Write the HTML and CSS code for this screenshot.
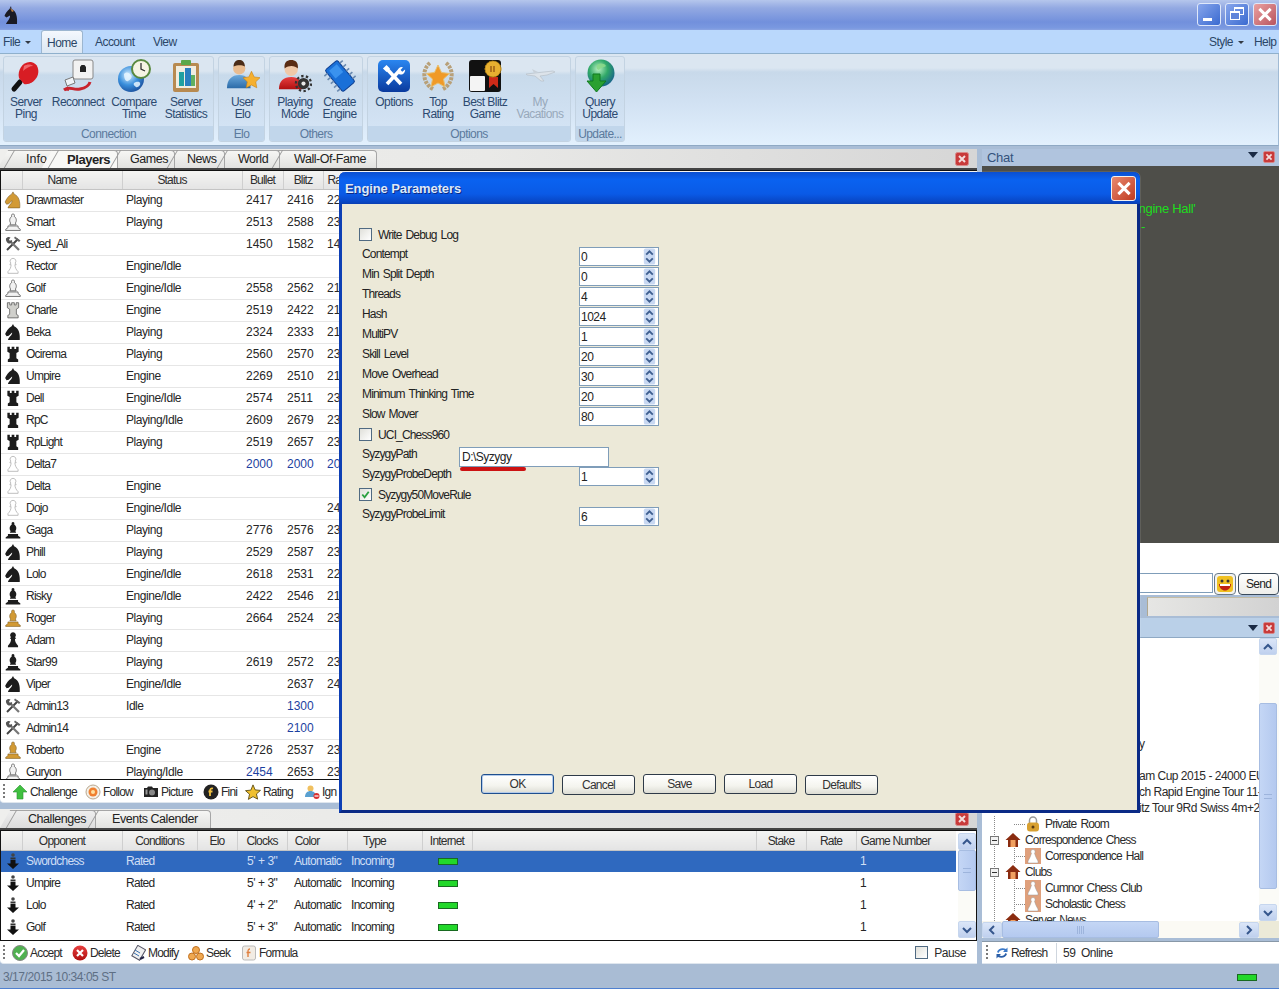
FILE: index.html
```html
<!DOCTYPE html>
<html lang="en">
<head>
<meta charset="utf-8">
<title>Engine Parameters</title>
<link rel="stylesheet" href="styles.css">
</head>
<body>
<svg class="defs" width="0" height="0" aria-hidden="true">
  <defs>
    <linearGradient id="gBlue" x1="0" y1="0" x2="0" y2="1"><stop offset="0" stop-color="#2a86f0"/><stop offset="1" stop-color="#0a3a9e"/></linearGradient>
    <radialGradient id="gGlobe" cx=".4" cy=".35" r=".7"><stop offset="0" stop-color="#d8efff"/><stop offset=".55" stop-color="#3a8fdc"/><stop offset="1" stop-color="#1a4f9c"/></radialGradient>
    <radialGradient id="gGreenGlobe" cx=".4" cy=".35" r=".7"><stop offset="0" stop-color="#b8f0c0"/><stop offset=".5" stop-color="#30a868"/><stop offset="1" stop-color="#16608c"/></radialGradient>
    <linearGradient id="gShirt" x1="0" y1="0" x2="0" y2="1"><stop offset="0" stop-color="#6aa8dc"/><stop offset="1" stop-color="#2a6aa8"/></linearGradient>
    <linearGradient id="gRed" x1="0" y1="0" x2="0" y2="1"><stop offset="0" stop-color="#e84040"/><stop offset="1" stop-color="#b01010"/></linearGradient>

    <symbol id="knight" viewBox="0 0 16 16"><path d="M3.500 15h10.500c.4-5-.5-10.500-5-12.200L8 .8 6.800 2.800C4 4 2 7.500 1 9.800l1.300 2 1.900-.5 3-2.800c.5 2-2.500 3.500-3.700 6.500z"/></symbol>
    <symbol id="rook" viewBox="0 0 16 16"><path d="M3 1.500h2.200v2h1.600v-2h2.400v2h1.600v-2H13V6l-2 1.200v4.600l1.600 1V15H3.400v-2.200l1.600-1V7.200L3 6z"/></symbol>
    <symbol id="bishop" viewBox="0 0 16 16"><path d="M8 .8a1.300 1.300 0 0 1 1 2.100c2 1.400 2.600 4 1.100 6l.7 1.600H5.200l.7-1.600C4.400 6.900 5 4.300 7 2.900A1.300 1.300 0 0 1 8 .8z"/><path d="M3.500 11.500h9v1.500l2 1.500v1h-13v-1l2-1.500z"/></symbol>
    <symbol id="pawn" viewBox="0 0 16 16"><path d="M8 1.200a2.500 2.500 0 0 1 1.800 4.300c.7 .3 1 .8 1 1.300H9.700c0 2.800 1.300 4.600 2.800 6.200v1.500h-9V13c1.500-1.600 2.800-3.400 2.800-6.200H5.200c0-.5.300-1 1-1.300A2.500 2.500 0 0 1 8 1.200z"/></symbol>
    <symbol id="tools" viewBox="0 0 18 18"><path d="M3 15 14 4" stroke="#444" stroke-width="2" fill="none"/><path d="M11 1.500l5.500 4-1.500 1.500-5-4z" fill="#666"/><path d="M15 15 6 6" stroke="#777" stroke-width="2.200" fill="none"/><path d="M2 3.500c1-1.500 3-2 4.500-1L5 4.500l1 1.500 2-1c.5 1.500-.5 3-2 3.500-2 .5-4.500-2-4-5z" fill="#555"/></symbol>
    <symbol id="down" viewBox="0 0 16 18"><circle cx="8" cy="3" r="1.800" fill="#444"/><rect x="5.500" y="5.500" width="5" height="2" fill="#333"/><path d="M5.500 8h5v3.500H14L8 17 2 11.500h3.500z" fill="#111"/></symbol>
    <symbol id="chevup" viewBox="0 0 12 12"><path d="M2 8l4-4 4 4" fill="none" stroke="#35568c" stroke-width="2"/></symbol>
    <symbol id="chevdn" viewBox="0 0 12 12"><path d="M2 4l4 4 4-4" fill="none" stroke="#35568c" stroke-width="2"/></symbol>
    <symbol id="chevl" viewBox="0 0 12 12"><path d="M8 2 4 6l4 4" fill="none" stroke="#35568c" stroke-width="2"/></symbol>
    <symbol id="chevr" viewBox="0 0 12 12"><path d="M4 2l4 4-4 4" fill="none" stroke="#35568c" stroke-width="2"/></symbol>
    <symbol id="spinbtns" viewBox="0 0 13 18"><rect x=".5" y=".5" width="12" height="17" rx="2" fill="#c8d8f2"/><path d="M3 7l3.500-3.500L10 7" fill="none" stroke="#3f5f90" stroke-width="2"/><path d="M3 11l3.500 3.500L10 11" fill="none" stroke="#3f5f90" stroke-width="2"/></symbol>
    <symbol id="closex" viewBox="0 0 14 14"><rect x=".5" y=".5" width="13" height="13" rx="2" fill="#c83a3a" stroke="#d98a8a"/><path d="M4 4l6 6M10 4l-6 6" stroke="#f4dcdc" stroke-width="2"/></symbol>

    <symbol id="paddle" viewBox="0 0 34 34"><path d="M11 23 5 30" stroke="#111" stroke-width="5" stroke-linecap="round"/><path d="M10 19C8 11 14 2 22 3c7 1 9 9 6 15-3 5-8 8-13 7z" fill="#d81d24"/><path d="M15 7c3-2 7-2 9 0-3 0-7 2-10 5z" fill="#f0686c"/></symbol>
    <symbol id="reconnect" viewBox="0 0 34 34"><rect x="12" y="1" width="20" height="19" rx="2" fill="#f2f2f2" stroke="#888"/><path d="M19 8l1.500-2h3L25 8v5h-6z" fill="#222"/><path d="M4 21l8-3 2 6-8 3z" fill="#eef2f6" stroke="#777"/><path d="M3 31c6-5 9 1 16-1 5-1 9-3 10-7" fill="none" stroke="#c8242e" stroke-width="3"/><path d="M3 31l4-4 1 5z" fill="#c8242e"/></symbol>
    <symbol id="compare" viewBox="0 0 34 34"><circle cx="14" cy="20" r="13" fill="url(#gGlobe)"/><path d="M7 15c3-3 5-1 7 1s-1 5-3 6-4-2-4-7zM17 24c2-1 5-2 6 0s-2 5-4 4-3-3-2-4z" fill="#e8f6ff" opacity=".85"/><circle cx="24" cy="10" r="9" fill="#f5f4e4" stroke="#5a8a40" stroke-width="2"/><path d="M24 4v6l4 2" fill="none" stroke="#333" stroke-width="1.300"/></symbol>
    <symbol id="stats" viewBox="0 0 34 34"><rect x="4" y="4" width="26" height="29" rx="2" fill="#b88a50"/><rect x="7" y="7" width="20" height="22" fill="#f0ede0"/><rect x="10" y="13" width="5" height="14" fill="#20a0a0"/><rect x="16" y="9" width="6" height="18" fill="#2a7fc0"/><rect x="22" y="16" width="4" height="11" fill="#60b060"/><rect x="12" y="1" width="10" height="5" rx="1" fill="#5aa84a"/></symbol>
    <symbol id="userelo" viewBox="0 0 36 36"><circle cx="14" cy="10" r="6.500" fill="#e9bc90"/><path d="M8 8c0-5 3-7 6-7s6 2 6 7c-3-2-8-2-12 0z" fill="#4a2c18"/><path d="M1 31c0-9 5-14 13-14s12 5 12 14z" fill="url(#gShirt)"/><path d="M27 13l2.800 6 6.200.8-4.500 4.400 1.100 6.300-5.600-3-5.600 3 1.100-6.300-4.500-4.400 6.200-.8z" fill="#f5b030" stroke="#c88010" stroke-width=".6"/></symbol>
    <symbol id="playmode" viewBox="0 0 36 36"><circle cx="14" cy="11" r="7" fill="#f0c8a8"/><path d="M7 10C6 3 10 1 14 1s8 2 7 9c-3-3-9-4-14 0z" fill="#5a2c14"/><path d="M1 32c0-9 5-13 13-13s12 4 12 13z" fill="url(#gRed)"/><circle cx="27" cy="26" r="6" fill="#333"/><circle cx="27" cy="26" r="8" fill="none" stroke="#333" stroke-width="2.400" stroke-dasharray="2.500 2.500"/><circle cx="27" cy="26" r="2.200" fill="#e8e8e8"/></symbol>
    <symbol id="engine" viewBox="0 0 34 34"><g transform="rotate(-40 17 17)"><rect x="9" y="3" width="16" height="28" rx="2" fill="#1a70d8" stroke="#0a3c90"/><path d="M5 7h4M5 12h4M5 17h4M5 22h4M5 27h4M25 7h4M25 12h4M25 17h4M25 22h4M25 27h4" stroke="#6a8ab0" stroke-width="1.600"/><rect x="12" y="6" width="10" height="10" fill="#3a92ee"/></g></symbol>
    <symbol id="options" viewBox="0 0 34 34"><rect x="1" y="1" width="32" height="32" rx="5" fill="url(#gBlue)"/><path d="M10 25 23 11" stroke="#fff" stroke-width="3.600"/><path d="M22 15c-2-3-1-6 2-7l2 .2-2.500 2.800 1.800 1.800 2.800-2.400c.4 3-2.800 6.400-6.100 4.600z" fill="#fff"/><path d="M10 10l14 15" stroke="#fff" stroke-width="3.600"/><rect x="7" y="7" width="5" height="5" fill="#fff" transform="rotate(45 9.500 9.500)"/></symbol>
    <symbol id="toprating" viewBox="0 0 34 34"><path d="M9 4C1 10 1 24 12 30M25 4c8 6 8 20-3 26" fill="none" stroke="#b8a078" stroke-width="4" stroke-dasharray="3 1"/><path d="M17 6l3.500 7.500 8 1-6 5.500 1.600 8-7.100-4-7.100 4 1.600-8-6-5.500 8-1z" fill="#f09a28" stroke="#e8c070"/></symbol>
    <symbol id="blitz" viewBox="0 0 34 34"><rect x="1" y="1" width="32" height="32" rx="3" fill="#111"/><rect x="2" y="17" width="15" height="15" rx="1" fill="#f4f4f4"/><rect x="17" y="2" width="15" height="15" fill="#111"/><path d="M21 18h9v11l-4.500-4-4.500 4z" fill="#cc2a18"/><circle cx="25" cy="10" r="8" fill="#e8b030" stroke="#c08a10" stroke-dasharray="2 1"/><path d="M23 7v6M26 7v6" stroke="#8a4a10" stroke-width="1.200"/></symbol>
    <symbol id="plane" viewBox="0 0 34 34"><path d="M3 15l27-3 2 1-8 3-7 1 4 5-3 0-6-5-8-1z" fill="#dce3ea" stroke="#b8c0c8" stroke-width=".7"/><path d="M9 10l6 3-4 1z" fill="#c8d0d8"/></symbol>
    <symbol id="query" viewBox="0 0 34 34"><circle cx="18" cy="14" r="13.500" fill="url(#gGreenGlobe)"/><path d="M14 6c3-2 7-2 9 1-2 2-5 1-7 4-2 0-3-3-2-5z" fill="#8ad88a" opacity=".9"/><path d="M10 15v7H4l9.500 11L23 22h-6v-7z" fill="#2aa030" stroke="#0f7a20"/></symbol>

    <symbol id="arrowup" viewBox="0 0 16 16"><path d="M8 1l7 7h-4v7H5V8H1z" fill="#40c040" stroke="#2a9030" stroke-width=".6"/></symbol>
    <symbol id="follow" viewBox="0 0 16 16"><circle cx="8" cy="8" r="7" fill="#f4f0e8" stroke="#b8a890"/><circle cx="8" cy="8" r="4.500" fill="#f08030"/><circle cx="8" cy="8" r="2" fill="#ffe0a0"/></symbol>
    <symbol id="camera" viewBox="0 0 16 16"><path d="M1 4h3l1-1.500h4L10 4h5v9H1z" fill="#222"/><circle cx="9" cy="8.500" r="3" fill="#888"/><rect x="2.500" y="5.500" width="2" height="5" fill="#999"/></symbol>
    <symbol id="fini" viewBox="0 0 16 16"><circle cx="8" cy="8" r="7.500" fill="#222"/><path d="M10 4.500C8 4 7 5 7 7v5M5.500 7.500h4" fill="none" stroke="#f0c040" stroke-width="1.800"/></symbol>
    <symbol id="ratingstar" viewBox="0 0 18 18"><path d="M9 1l2.400 5.600 6 .6-4.500 4 1.300 5.800L9 14.200l-5.200 3.100 1.300-5.800-4.500-4 6-.6z" fill="#f0c030" stroke="#5a4a10"/></symbol>
    <symbol id="ignore" viewBox="0 0 16 16"><circle cx="6.500" cy="4.500" r="3" fill="#f0c060"/><path d="M1 13c0-4 2.500-6 5.500-6S12 9 12 13z" fill="#5aa0d0"/><circle cx="12.500" cy="12" r="3" fill="#d83030"/><path d="M10.500 12h4" stroke="#fff" stroke-width="1.200"/></symbol>
    <symbol id="accept" viewBox="0 0 16 16"><circle cx="8" cy="8" r="7.500" fill="#50b050" stroke="#888"/><path d="M4 8l3 3 5-6" fill="none" stroke="#fff" stroke-width="2.200"/></symbol>
    <symbol id="delete" viewBox="0 0 16 16"><circle cx="8" cy="8" r="7.500" fill="url(#gRed)"/><path d="M5 5l6 6M11 5l-6 6" stroke="#fff" stroke-width="2.200"/></symbol>
    <symbol id="modify" viewBox="0 0 16 16"><rect x="4" y="1.500" width="9" height="12" fill="#f0f0f0" stroke="#556" transform="rotate(30 8 8)"/><path d="M5 5l5 3M4 8l5 3" stroke="#3a70b0"/><path d="M10 14l4-2" stroke="#224" stroke-width="2"/></symbol>
    <symbol id="seek" viewBox="0 0 16 16"><circle cx="8" cy="5" r="3.500" fill="#f0a850" stroke="#c07020"/><circle cx="4" cy="11.500" r="3.500" fill="#f0a850" stroke="#c07020"/><circle cx="12" cy="11.500" r="3.500" fill="#f0a850" stroke="#c07020"/></symbol>
    <symbol id="formula" viewBox="0 0 16 16"><rect x="1.500" y="1" width="13" height="14" rx="2" fill="#f2ece4" stroke="#bbb"/><path d="M9 4c-2 0-2 1-2 3v5M5.500 7.500h4" fill="none" stroke="#e08040" stroke-width="1.400"/></symbol>
    <symbol id="refresh" viewBox="0 0 14 14"><path d="M2 6c1-3 5-5 9-3l1.500-1.500V6H8l1.500-1.500C7 3.500 4.500 4.500 3.500 7z" fill="#3a78c8"/><path d="M12 8c-1 3-5 5-9 3l-1.500 1.500V8H6l-1.500 1.500c2.500 1 5 0 6-2.500z" fill="#2a5ea8"/></symbol>
    <symbol id="house" viewBox="0 0 16 16"><path d="M8 1 .5 8h2.500v7h10V8h2.500z" fill="#8a2c10"/><rect x="5.500" y="8" width="5" height="7" fill="#f0a060"/></symbol>
    <symbol id="hall" viewBox="0 0 16 16"><rect width="16" height="16" fill="#dfa07c"/><path d="M8 1.500a2.200 2.200 0 0 1 1.500 3.800c1 3 2 5.500 3.500 7.700v2H3v-2c1.500-2.200 2.500-4.700 3.500-7.700A2.200 2.200 0 0 1 8 1.500z" fill="#fff" stroke="#999" stroke-width=".5"/></symbol>
    <symbol id="lock" viewBox="0 0 14 16"><path d="M3.500 7V4.500a3.500 3.500 0 0 1 7 0V7" fill="none" stroke="#999" stroke-width="1.500"/><rect x="1" y="6.500" width="12" height="9" rx="3" fill="#d8a030"/><circle cx="7" cy="11" r="1.500" fill="#5a3a10"/></symbol>
    <symbol id="smiley" viewBox="0 0 18 18"><rect x="1" y="1" width="16" height="16" rx="3" fill="#f0c020"/><circle cx="6" cy="6" r="1.500" fill="#333"/><circle cx="12" cy="6" r="1.500" fill="#333"/><path d="M3 9h12c0 4-3 6.500-6 6.500S3 13 3 9z" fill="#c02010"/><rect x="4" y="9" width="10" height="2" fill="#fff"/></symbol>
    <symbol id="knightlogo" viewBox="0 0 16 22"><path d="M3 20h11c.5-7-.5-13-5.500-15L8 2 6.500 5C4.500 6.500 2 10 1.500 12l2 1.500 3.500-2c.5 3-3 6-4 8.500z" fill="#1a1a24"/><path d="M7 4l4 3-2 1z" fill="#c08040"/></symbol>
  </defs>
</svg>

<div class="app">
  <header class="titlebar">
    <svg class="logo"><use href="#knightlogo"/></svg>
    <div class="winbtns">
      <button class="winbtn" aria-label="Minimize"><span class="min-mark"></span></button>
      <button class="winbtn" aria-label="Restore"><span class="max-back"></span><span class="max-front"></span></button>
      <button class="winbtn winbtn-close" aria-label="Close"><span class="x-mark"></span></button>
    </div>
  </header>

  <nav class="menubar">
    <span class="menu-item menu-file">File<i class="caret"></i></span>
    <span class="menu-item menu-home">Home</span>
    <span class="menu-item menu-account">Account</span>
    <span class="menu-item menu-view">View</span>
    <span class="menu-item menu-style">Style<i class="caret"></i></span>
    <span class="menu-item menu-help">Help</span>
  </nav>

  <section class="ribbon">
    <div class="group g1">
      <div class="group-items">
        <div class="rb w44"><svg class="rb-ic"><use href="#paddle"/></svg><span>Server<br>Ping</span></div>
        <div class="rb w60"><svg class="rb-ic"><use href="#reconnect"/></svg><span>Reconnect</span></div>
        <div class="rb w52"><svg class="rb-ic"><use href="#compare"/></svg><span>Compare<br>Time</span></div>
        <div class="rb w52"><svg class="rb-ic"><use href="#stats"/></svg><span>Server<br>Statistics</span></div>
      </div>
      <div class="group-label">Connection</div>
    </div>
    <div class="group g2">
      <div class="group-items">
        <div class="rb w47"><svg class="rb-ic"><use href="#userelo"/></svg><span>User<br>Elo</span></div>
      </div>
      <div class="group-label">Elo</div>
    </div>
    <div class="group g3">
      <div class="group-items">
        <div class="rb w50"><svg class="rb-ic"><use href="#playmode"/></svg><span>Playing<br>Mode</span></div>
        <div class="rb w39"><svg class="rb-ic"><use href="#engine"/></svg><span>Create<br>Engine</span></div>
      </div>
      <div class="group-label">Others</div>
    </div>
    <div class="group g4">
      <div class="group-items">
        <div class="rb w52"><svg class="rb-ic"><use href="#options"/></svg><span>Options</span></div>
        <div class="rb w36"><svg class="rb-ic"><use href="#toprating"/></svg><span>Top<br>Rating</span></div>
        <div class="rb w58"><svg class="rb-ic"><use href="#blitz"/></svg><span>Best Blitz<br>Game</span></div>
        <div class="rb w52 rb-off"><svg class="rb-ic"><use href="#plane"/></svg><span>My<br>Vacations</span></div>
      </div>
      <div class="group-label">Options</div>
    </div>
    <div class="group g5">
      <div class="group-items">
        <div class="rb w48"><svg class="rb-ic"><use href="#query"/></svg><span>Query<br>Update</span></div>
      </div>
      <div class="group-label">Update...</div>
    </div>
  </section>

  <main class="main">
    <div class="left">
      <div class="tabstrip">
        <span class="tab tab-info">Info</span>
        <span class="tab tab-players active">Players</span>
        <span class="tab tab-games">Games</span>
        <span class="tab tab-news">News</span>
        <span class="tab tab-world">World</span>
        <span class="tab tab-wall">Wall-Of-Fame</span>
        <svg class="panel-x"><use href="#closex"/></svg>
      </div>

      <div class="list list-players">
        <table class="grid grid-players">
          <colgroup><col class="c21"><col class="c100"><col class="c120"><col class="c41"><col class="c40"><col></colgroup>
          <thead><tr><th></th><th class="th-shift">Name</th><th class="th-shift">Status</th><th>Bullet</th><th>Blitz</th><th class="th-left">Ra</th></tr></thead>
          <tbody>
            <tr><td><svg class="pc gold"><use href="#knight"/></svg></td><td>Drawmaster</td><td>Playing</td><td>2417</td><td>2416</td><td>22</td></tr>
            <tr><td><svg class="pc pale"><use href="#bishop"/></svg></td><td>Smart</td><td>Playing</td><td>2513</td><td>2588</td><td>23</td></tr>
            <tr><td><svg class="pc"><use href="#tools"/></svg></td><td>Syed_Ali</td><td></td><td>1450</td><td>1582</td><td>14</td></tr>
            <tr><td><svg class="pc hollow"><use href="#pawn"/></svg></td><td>Rector</td><td>Engine/Idle</td><td></td><td></td><td></td></tr>
            <tr><td><svg class="pc pale"><use href="#bishop"/></svg></td><td>Golf</td><td>Engine/Idle</td><td>2558</td><td>2562</td><td>21</td></tr>
            <tr><td><svg class="pc pale2"><use href="#rook"/></svg></td><td>Charle</td><td>Engine</td><td>2519</td><td>2422</td><td>21</td></tr>
            <tr><td><svg class="pc"><use href="#knight"/></svg></td><td>Beka</td><td>Playing</td><td>2324</td><td>2333</td><td>21</td></tr>
            <tr><td><svg class="pc"><use href="#rook"/></svg></td><td>Ocirema</td><td>Playing</td><td>2560</td><td>2570</td><td>23</td></tr>
            <tr><td><svg class="pc"><use href="#knight"/></svg></td><td>Umpire</td><td>Engine</td><td>2269</td><td>2510</td><td>21</td></tr>
            <tr><td><svg class="pc"><use href="#rook"/></svg></td><td>Dell</td><td>Engine/Idle</td><td>2574</td><td>2511</td><td>23</td></tr>
            <tr><td><svg class="pc"><use href="#rook"/></svg></td><td>RpC</td><td>Playing/Idle</td><td>2609</td><td>2679</td><td>23</td></tr>
            <tr><td><svg class="pc"><use href="#rook"/></svg></td><td>RpLight</td><td>Playing</td><td>2519</td><td>2657</td><td>23</td></tr>
            <tr><td><svg class="pc hollow"><use href="#pawn"/></svg></td><td>Delta7</td><td></td><td class="blue">2000</td><td class="blue">2000</td><td class="blue">20</td></tr>
            <tr><td><svg class="pc hollow"><use href="#pawn"/></svg></td><td>Delta</td><td>Engine</td><td></td><td></td><td></td></tr>
            <tr><td><svg class="pc hollow"><use href="#pawn"/></svg></td><td>Dojo</td><td>Engine/Idle</td><td></td><td></td><td>24</td></tr>
            <tr><td><svg class="pc"><use href="#bishop"/></svg></td><td>Gaga</td><td>Playing</td><td>2776</td><td>2576</td><td>23</td></tr>
            <tr><td><svg class="pc"><use href="#knight"/></svg></td><td>Phill</td><td>Playing</td><td>2529</td><td>2587</td><td>23</td></tr>
            <tr><td><svg class="pc"><use href="#knight"/></svg></td><td>Lolo</td><td>Engine/Idle</td><td>2618</td><td>2531</td><td>22</td></tr>
            <tr><td><svg class="pc"><use href="#bishop"/></svg></td><td>Risky</td><td>Engine/Idle</td><td>2422</td><td>2546</td><td>21</td></tr>
            <tr><td><svg class="pc gold"><use href="#bishop"/></svg></td><td>Roger</td><td>Playing</td><td>2664</td><td>2524</td><td>23</td></tr>
            <tr><td><svg class="pc"><use href="#pawn"/></svg></td><td>Adam</td><td>Playing</td><td></td><td></td><td></td></tr>
            <tr><td><svg class="pc"><use href="#bishop"/></svg></td><td>Star99</td><td>Playing</td><td>2619</td><td>2572</td><td>23</td></tr>
            <tr><td><svg class="pc"><use href="#knight"/></svg></td><td>Viper</td><td>Engine/Idle</td><td></td><td>2637</td><td>24</td></tr>
            <tr><td><svg class="pc"><use href="#tools"/></svg></td><td>Admin13</td><td>Idle</td><td></td><td class="blue">1300</td><td></td></tr>
            <tr><td><svg class="pc"><use href="#tools"/></svg></td><td>Admin14</td><td></td><td></td><td class="blue">2100</td><td></td></tr>
            <tr><td><svg class="pc gold"><use href="#bishop"/></svg></td><td>Roberto</td><td>Engine</td><td>2726</td><td>2537</td><td>23</td></tr>
            <tr><td><svg class="pc pale"><use href="#bishop"/></svg></td><td>Guryon</td><td>Playing/Idle</td><td class="blue">2454</td><td>2653</td><td>23</td></tr>
          </tbody>
        </table>
      </div>

      <div class="toolbar">
        <i class="grip"></i>
        <span class="tool t-challenge"><svg class="ti"><use href="#arrowup"/></svg>Challenge</span>
        <span class="tool t-follow"><svg class="ti"><use href="#follow"/></svg>Follow</span>
        <span class="tool t-picture"><svg class="ti"><use href="#camera"/></svg>Picture</span>
        <span class="tool t-fini"><svg class="ti"><use href="#fini"/></svg>Fini</span>
        <span class="tool t-rating"><svg class="ti"><use href="#ratingstar"/></svg>Rating</span>
        <span class="tool t-ignore"><svg class="ti"><use href="#ignore"/></svg>Ign</span>
      </div>

      <div class="spacer"></div>

      <div class="tabstrip">
        <span class="tab tab-chal active-soft">Challenges</span>
        <span class="tab tab-events">Events Calender</span>
        <svg class="panel-x"><use href="#closex"/></svg>
      </div>

      <div class="list list-chal">
        <table class="grid grid-chal">
          <colgroup><col class="c21"><col class="c100"><col class="c75"><col class="c40"><col class="c50"><col class="c60"><col class="c75"><col class="c50"><col class="c284"><col class="c50"><col class="c50"><col class="c100"></colgroup>
          <thead><tr><th></th><th class="th-shift">Opponent</th><th>Conditions</th><th>Elo</th><th>Clocks</th><th class="th-shift">Color</th><th class="th-shift">Type</th><th>Internet</th><th></th><th>Stake</th><th>Rate</th><th class="th-left">Game Number</th></tr></thead>
          <tbody>
            <tr class="sel"><td><svg class="pc dn"><use href="#down"/></svg></td><td>Swordchess</td><td>Rated</td><td></td><td class="clock">5' + 3"</td><td class="auto">Automatic</td><td>Incoming</td><td><i class="net"></i></td><td></td><td></td><td></td><td>1</td></tr>
            <tr><td><svg class="pc dn"><use href="#down"/></svg></td><td>Umpire</td><td>Rated</td><td></td><td class="clock">5' + 3"</td><td class="auto">Automatic</td><td>Incoming</td><td><i class="net"></i></td><td></td><td></td><td></td><td>1</td></tr>
            <tr><td><svg class="pc dn"><use href="#down"/></svg></td><td>Lolo</td><td>Rated</td><td></td><td class="clock">4' + 2"</td><td class="auto">Automatic</td><td>Incoming</td><td><i class="net"></i></td><td></td><td></td><td></td><td>1</td></tr>
            <tr><td><svg class="pc dn"><use href="#down"/></svg></td><td>Golf</td><td>Rated</td><td></td><td class="clock">5' + 3"</td><td class="auto">Automatic</td><td>Incoming</td><td><i class="net"></i></td><td></td><td></td><td></td><td>1</td></tr>
          </tbody>
        </table>
        <div class="vsb vsb-chal">
          <span class="sb-btn"><svg class="chev"><use href="#chevup"/></svg></span>
          <span class="sb-thumb thumb-chal"><i class="sb-grip"></i></span>
          <span class="sb-track"></span>
          <span class="sb-btn"><svg class="chev"><use href="#chevdn"/></svg></span>
        </div>
      </div>

      <div class="toolbar toolbar-bottom">
        <i class="grip"></i>
        <span class="tool t-accept"><svg class="ti"><use href="#accept"/></svg>Accept</span>
        <span class="tool t-delete"><svg class="ti"><use href="#delete"/></svg>Delete</span>
        <span class="tool t-modify"><svg class="ti"><use href="#modify"/></svg>Modify</span>
        <span class="tool t-seek"><svg class="ti"><use href="#seek"/></svg>Seek</span>
        <span class="tool t-formula"><svg class="ti"><use href="#formula"/></svg>Formula</span>
        <span class="tool t-pause"><i class="check"></i>Pause</span>
      </div>
    </div>

    <div class="right">
      <div class="dock-head chat-head"><span class="dock-title">Chat</span><i class="dock-arrow"></i><svg class="dock-x"><use href="#closex"/></svg></div>
      <div class="chat">
        <p class="chat-line">'Engine Hall'</p>
        <p class="chat-line chat-dash">-</p>
      </div>
      <div class="chat-white"></div>
      <div class="compose">
        <span class="compose-input"></span>
        <span class="smile-btn"><svg class="smile"><use href="#smiley"/></svg></span>
        <span class="send-btn">Send</span>
      </div>
      <div class="gray-strip"></div>
      <div class="dock-head tree-head"><i class="dock-arrow"></i><svg class="dock-x"><use href="#closex"/></svg></div>
      <div class="tree-wrap">
        <div class="tree">
          <div class="t-row t-clip">y</div>
          <div class="t-row"></div>
          <div class="t-row t-clip">am Cup 2015 - 24000 EU</div>
          <div class="t-row t-clip">ch Rapid Engine Tour 11-</div>
          <div class="t-row t-clip">itz Tour 9Rd Swiss 4m+2</div>
          <div class="t-row t-sub"><svg class="t-lock"><use href="#lock"/></svg>Private Room</div>
          <div class="t-row t-top"><i class="t-box"></i><svg class="t-house"><use href="#house"/></svg>Correspondence Chess</div>
          <div class="t-row t-leaf"><svg class="t-hall"><use href="#hall"/></svg>Correspondence Hall</div>
          <div class="t-row t-top"><i class="t-box"></i><svg class="t-house"><use href="#house"/></svg>Clubs</div>
          <div class="t-row t-leaf"><svg class="t-hall"><use href="#hall"/></svg>Cumnor Chess Club</div>
          <div class="t-row t-leaf"><svg class="t-hall"><use href="#hall"/></svg>Scholastic Chess</div>
          <div class="t-row t-news"><svg class="t-house"><use href="#house"/></svg>Server News</div>
        </div>
        <div class="vsb vsb-tree">
          <span class="sb-btn"><svg class="chev"><use href="#chevup"/></svg></span>
          <span class="sb-track track-top"></span>
          <span class="sb-thumb thumb-tree"><i class="sb-grip"></i></span>
          <span class="sb-track"></span>
          <span class="sb-btn"><svg class="chev"><use href="#chevdn"/></svg></span>
        </div>
      </div>
      <div class="hsb">
        <span class="sb-btn hb"><svg class="chev"><use href="#chevl"/></svg></span>
        <span class="hsb-thumb"><i class="hsb-grip"></i></span>
        <span class="sb-track"></span>
        <span class="sb-btn hb"><svg class="chev"><use href="#chevr"/></svg></span>
        <span class="hsb-corner"></span>
      </div>
      <div class="toolbar toolbar-right">
        <i class="grip"></i>
        <span class="tool t-refresh"><svg class="ti"><use href="#refresh"/></svg>Refresh</span>
        <span class="tool-sep"></span>
        <span class="online">59&nbsp; Online</span>
      </div>
    </div>
  </main>

  <footer class="status">
    <span class="status-time">3/17/2015 10:34:05 ST</span>
    <i class="net net-status"></i>
  </footer>

  <section class="dialog">
    <header class="dlg-title">
      <span>Engine Parameters</span>
      <button class="dlg-close" aria-label="Close"><span class="x-mark"></span></button>
    </header>
    <div class="dlg-body">
      <div class="form">
        <label class="f-check"><i class="check"></i>Write Debug Log</label>
        <span class="lab">Contempt</span><span class="spin"><b>0</b><svg class="spin-ic"><use href="#spinbtns"/></svg></span>
        <span class="lab">Min Split Depth</span><span class="spin"><b>0</b><svg class="spin-ic"><use href="#spinbtns"/></svg></span>
        <span class="lab">Threads</span><span class="spin"><b>4</b><svg class="spin-ic"><use href="#spinbtns"/></svg></span>
        <span class="lab">Hash</span><span class="spin"><b>1024</b><svg class="spin-ic"><use href="#spinbtns"/></svg></span>
        <span class="lab">MultiPV</span><span class="spin"><b>1</b><svg class="spin-ic"><use href="#spinbtns"/></svg></span>
        <span class="lab">Skill Level</span><span class="spin"><b>20</b><svg class="spin-ic"><use href="#spinbtns"/></svg></span>
        <span class="lab">Move Overhead</span><span class="spin"><b>30</b><svg class="spin-ic"><use href="#spinbtns"/></svg></span>
        <span class="lab">Minimum Thinking Time</span><span class="spin"><b>20</b><svg class="spin-ic"><use href="#spinbtns"/></svg></span>
        <span class="lab">Slow Mover</span><span class="spin"><b>80</b><svg class="spin-ic"><use href="#spinbtns"/></svg></span>
        <label class="f-check"><i class="check"></i>UCI_Chess960</label>
        <span class="lab lab-short">SyzygyPath</span><span class="path">D:\Syzygy</span>
        <span class="lab">SyzygyProbeDepth</span><span class="spin"><b>1</b><svg class="spin-ic"><use href="#spinbtns"/></svg></span>
        <label class="f-check"><i class="check checked"><svg class="tick" viewBox="0 0 12 12"><path d="M2.500 6l2.500 3 4.500-6" fill="none" stroke="#2aa040" stroke-width="2"/></svg></i>Syzygy50MoveRule</label>
        <span class="lab">SyzygyProbeLimit</span><span class="spin"><b>6</b><svg class="spin-ic"><use href="#spinbtns"/></svg></span>
      </div>
      <div class="dlg-buttons">
        <button class="btn btn-ok">OK</button>
        <button class="btn btn-low">Cancel</button>
        <button class="btn">Save</button>
        <button class="btn">Load</button>
        <button class="btn btn-low">Defaults</button>
      </div>
    </div>
  </section>
</div>
</body>
</html>
```

FILE: styles.css
```css
* { box-sizing: border-box; }
html, body { margin: 0; padding: 0; height: 100%; background: #a9bdd6; }
body { font: 12px "Liberation Sans", Arial, sans-serif; letter-spacing: -.55px; color: #222; overflow: hidden; }
.defs { position: absolute; }
button { font: inherit; letter-spacing: inherit; color: inherit; padding: 0; }
p { margin: 0; }
i { display: block; }

.app { position: relative; width: 1279px; height: 989px; display: flex; flex-direction: column; overflow: hidden; }

/* title bar */
.titlebar { height: 30px; flex: none; display: flex; align-items: center; justify-content: space-between; padding: 0 2px 0 3px;
  background: linear-gradient(#b5c6ec 0, #93a9e2 8px, #7290dc 22px, #7a99e0 28px, #8aa4e2 30px); }
.logo { width: 16px; height: 22px; }
.winbtns { display: flex; gap: 4px; align-self: flex-start; margin-top: 3px; }
.winbtn { position: relative; width: 24px; height: 23px; border: 1px solid #dfe8fa; border-radius: 3px; background: linear-gradient(135deg, #88a6ec, #3a6ad0); }
.winbtn-close { background: linear-gradient(135deg, #eba0a0, #b8545f); }
.min-mark { position: absolute; left: 5px; bottom: 4px; width: 9px; height: 3px; background: #fff; }
.max-back { position: absolute; left: 8px; top: 3px; width: 10px; height: 8px; border: 1px solid #fff; border-top-width: 2px; }
.max-front { position: absolute; left: 4px; top: 7px; width: 10px; height: 9px; border: 1px solid #fff; border-top-width: 2px; background: #5f84da; }
.x-mark { position: absolute; inset: 0; }
.x-mark::before, .x-mark::after { content: ""; position: absolute; left: 50%; top: 50%; width: 16px; height: 3px; margin: -1.5px 0 0 -8px; background: #fff; transform: rotate(45deg); }
.x-mark::after { transform: rotate(-45deg); }

/* menu */
.menubar { height: 24px; flex: none; display: flex; align-items: flex-end; background: #bad8fc; color: #2b4666; border-bottom: 1px solid #8fb0cc; }
.menu-item { display: flex; align-items: center; height: 23px; padding-top: 1px; }
.menu-file { margin-left: 3px; width: 38px; }
.menu-home { width: 42px; justify-content: center; background: linear-gradient(#f4f8fd, #dbe7f3); border: 1px solid #9cb6d0; border-bottom: 0; border-radius: 3px 3px 0 0; margin-top: 1px; }
.menu-account { margin-left: 12px; width: 46px; }
.menu-view { margin-left: 12px; width: 30px; }
.menu-style { margin-left: auto; width: 45px; }
.menu-help { width: 25px; }
.caret { width: 0; height: 0; border: 3px solid transparent; border-top: 3px solid #333a44; border-bottom: 0; margin-left: 5px; }

/* ribbon */
.ribbon { height: 92px; flex: none; display: flex; gap: 4px; padding: 2px 0 0 3px; border-bottom: 1px solid #8fa9c4;
  background: linear-gradient(#dbe6f1 0, #dbe6f1 14px, #c8d9ea 18px, #d2e2f3 50px, #e2f0fd 90px); border-right: 1px solid #a0bad4; }
.group { display: flex; flex-direction: column; height: 86px; border: 1px solid #c3d3e2; border-radius: 3px; background: linear-gradient(#dbe6f1 0, #dbe6f1 14px, #c8daeb 18px, #d3e3f4 70px); overflow: hidden; }
.g1 { width: 211px; } .g2 { width: 47px; } .g3 { width: 94px; } .g4 { width: 204px; } .g5 { width: 50px; }
.group-items { display: flex; flex: 1; min-height: 0; }
.group-label { height: 15px; line-height: 17px; text-align: center; background: #c1d6eb; color: #5b7a9d; }
.rb { display: flex; flex-direction: column; align-items: center; flex: none; text-align: center; color: #2c4a70; line-height: 12px; }
.rb-ic { width: 34px; height: 34px; margin: 2px 0 3px; flex: none; }
.rb span { white-space: nowrap; }
.rb-off { color: #98a9bb; }
.w36 { width: 36px; } .w39 { width: 39px; } .w44 { width: 44px; } .w47 { width: 47px; } .w48 { width: 48px; } .w50 { width: 50px; } .w52 { width: 52px; } .w58 { width: 58px; } .w60 { width: 60px; }

/* main */
.main { flex: 1; min-height: 0; display: grid; grid-template-columns: 977px 297px; column-gap: 5px; padding-top: 3px; background: #a9bdd6; }
.left, .right { display: flex; flex-direction: column; min-width: 0; min-height: 0; }

.tabstrip { position: relative; isolation: isolate; height: 21px; flex: none; display: flex; align-items: flex-end; border-bottom: 2px solid #444;
  background: linear-gradient(90deg, #efefed, #e9e9e7 50%, #d6d6d6); font-size: 12.500px; letter-spacing: -.45px; color: #222; }
.tab { position: relative; height: 18px; line-height: 17px; border: 1px solid #a6a6a6; border-left: 0; border-bottom: 0; border-radius: 0 4px 0 0; background: linear-gradient(#f6f6f4, #e2e2e0); flex: none; }
.tab::before { content: ""; position: absolute; z-index: -1; left: -9px; top: -1px; bottom: 0; width: 20px; background: linear-gradient(#f6f6f4, #e2e2e0); border-top: 1px solid #a6a6a6; transform: skewX(-30deg); }
.tab::after { content: ""; position: absolute; z-index: 3; left: -3px; top: -1px; bottom: 0; width: 1px; background: #9a9a9a; transform: skewX(-30deg); }
.tab-info { margin-left: 12px; width: 44px; padding-left: 14px; letter-spacing: 0; }
.tab-players { z-index: 2; width: 62px; padding-left: 11px; font-weight: 700; font-size: 13px; background: #f8f8f6; }
.tab-players::before { background: #f8f8f6; }
.tab-games { width: 57px; padding-left: 12px; }
.tab-news { width: 50px; padding-left: 12px; }
.tab-world { width: 55px; padding-left: 13px; }
.tab-wall { width: 97px; padding-left: 14px; }
.tab-chal { z-index: 2; margin-left: 14px; width: 82px; padding-left: 14px; background: linear-gradient(#eee, #ddd); }
.tab-chal::before { background: linear-gradient(#eee, #ddd); }
.tab-events { width: 115px; padding-left: 16px; }
.panel-x { position: absolute; right: 8px; top: 3px; width: 14px; height: 14px; }

.list { flex: none; background: #fff; border: 1px solid #111; border-right: 0; border-width: 1px 0 1px 1px; overflow: hidden; }
.list-players { height: 610px; }
.list-chal { height: 111px; display: flex; align-items: flex-start; border-right: 1px solid #111; }

.grid { border-collapse: collapse; table-layout: fixed; width: 976px; }
.grid-chal { width: 955px; flex: none; }
.c21 { width: 21px; } .c40 { width: 40px; } .c41 { width: 41px; } .c50 { width: 50px; } .c60 { width: 60px; } .c75 { width: 75px; } .c100 { width: 100px; } .c120 { width: 120px; } .c284 { width: 284px; }
.grid th { height: 18px; padding: 1px 3px 0; font-weight: 400; color: #2e2e2e; letter-spacing: -.8px; text-align: center; white-space: nowrap; overflow: hidden; background: linear-gradient(#f4f4f2, #e4e4e4); border-right: 1px solid #cfcfcf; border-bottom: 1px solid #c4c4c4; }
.grid th:last-child { border-right: 0; }
.grid .th-shift { padding-right: 23px; }
.grid .th-left { text-align: left; padding-left: 4px; }
.grid td { height: 22px; padding: 0 0 0 4px; white-space: nowrap; overflow: hidden; color: #262626; letter-spacing: -.45px; border-bottom: 1px solid #e6e6e6; }
.grid td:nth-child(2) { letter-spacing: -.75px; }
.grid td:first-child { padding: 0 0 0 3px; }
.grid-players td:nth-child(n+4) { letter-spacing: 0; }
.grid-chal th { height: 19px; }
.grid-chal td { border-bottom: 0; letter-spacing: -.7px; }
.grid-chal .sel td { background: #2f69bf; color: #cfdff5; }
.grid .clock { padding-left: 10px; letter-spacing: -.45px; }
.grid .auto { padding-left: 7px; }
.grid .blue { color: #1c3fa0; }

.pc { display: block; width: 18px; height: 18px; fill: #1c1c1c; }
.gold { fill: #d29a35; stroke: #7a5a20; stroke-width: .5px; }
.pale { fill: #f2f2f2; stroke: #555; stroke-width: .7px; }
.pale2 { fill: #d0d0cc; stroke: #444; stroke-width: .6px; }
.hollow { fill: #fff; stroke: #b8b8b8; stroke-width: .8px; }
.net { width: 20px; height: 7px; margin-left: 12px; background: #22d82a; border: 1px solid #186a20; }

.vsb { display: flex; flex-direction: column; flex: none; width: 18px; background: #fbfbf7; }
.vsb-chal { margin-left: 2px; height: 105px; margin-top: 2px; }
.sb-btn { display: flex; align-items: center; justify-content: center; flex: none; height: 17px; background: linear-gradient(#dbe6f8, #bfd0ee); border: 1px solid #c6d6ee; border-radius: 2px; }
.chev { width: 12px; height: 12px; }
.sb-thumb { display: flex; align-items: center; justify-content: center; flex: none; background: linear-gradient(90deg, #c4d6f5, #b4c9ef); border: 1px solid #a7bde2; border-radius: 2px; }
.sb-grip { width: 8px; height: 5px; border-top: 1px solid #9db4dc; border-bottom: 1px solid #9db4dc; }
.sb-track { flex: 1; }
.thumb-chal { height: 41px; }

/* toolbars */
.toolbar { position: relative; height: 23px; flex: none; display: flex; align-items: center; background: #fff; padding: 1px 0 0 3px; border-bottom: 1px solid #dfe6ee; border-radius: 0 0 0 4px; }
.grip { width: 2px; height: 16px; flex: none; background: repeating-linear-gradient(#7a7a7a 0 2px, transparent 2px 4px); }
.tool { display: flex; align-items: center; flex: none; color: #2a2a2a; letter-spacing: -.8px; }
.ti { width: 16px; height: 16px; margin-right: 2px; flex: none; }
.t-challenge { margin-left: 7px; width: 73px; }
.t-follow { width: 58px; } .t-picture { width: 60px; } .t-fini { width: 42px; } .t-rating { width: 59px; }
.t-accept { margin-left: 7px; width: 60px; } .t-delete { width: 58px; } .t-modify { width: 58px; } .t-seek { width: 53px; } .t-formula { width: 60px; }
.t-pause { margin-left: auto; margin-right: 11px; letter-spacing: -.45px; }
.t-pause .check { margin-right: 6px; }
.toolbar-right { padding-left: 4px; }
.t-refresh { margin-left: 7px; width: 61px; }
.t-refresh .ti { width: 14px; height: 14px; margin-right: 2px; }
.tool-sep { width: 1px; height: 20px; background: #cfd6de; margin-right: 6px; }
.spacer { height: 6px; flex: none; }

/* right column */
.dock-head { position: relative; flex: none; background: #b0c4de; }
.chat-head { height: 17px; }
.dock-title { display: block; padding-left: 5px; font-size: 13px; color: #34527c; line-height: 17px; letter-spacing: -.3px; }
.dock-arrow { position: absolute; right: 21px; top: 3px; width: 0; height: 0; border: 5px solid transparent; border-top: 6px solid #1a2a44; border-bottom: 0; }
.dock-x { position: absolute; right: 4px; top: 2px; width: 12px; height: 12px; }
.chat { height: 377px; flex: none; background: #4e4e49; padding: 35px 0 0 146px; }
.chat-line { color: #1edc1e; font-size: 13px; letter-spacing: -.3px; line-height: 15px; }
.chat-dash { margin: 3px 0 0 13px; }
.chat-white { height: 30px; flex: none; background: #fff; }
.compose { height: 22px; flex: none; display: flex; align-items: center; background: #fff; padding-left: 158px; }
.compose-input { width: 73px; height: 20px; border: 1px solid #7f9db9; border-left: 0; align-self: flex-start; }
.smile-btn { width: 22px; height: 22px; margin-left: 1px; display: flex; align-items: center; justify-content: center; background: #f2f2ee; border: 1px solid #6a7a8a; border-radius: 4px; }
.smile { width: 18px; height: 18px; }
.send-btn { width: 41px; height: 22px; margin-left: 2px; text-align: center; line-height: 20px; letter-spacing: -.7px; background: linear-gradient(#fff, #eeeeea); border: 1px solid #3a4a5a; border-radius: 4px; }
.gray-strip { height: 19px; flex: none; margin-left: 165px; margin-top: 2px; background: linear-gradient(90deg, #e6e6e4, #d2d2d2); border-left: 1px solid #b0a890; border-top: 1px solid #c4bca4; }
.tree-head { height: 20px; margin-top: 2px; background: #bad0e8; border-bottom: 1px solid #8fa9c4; }
.tree-head .dock-arrow { top: 7px; }
.tree-head .dock-x { top: 4px; }
.tree-wrap { height: 283px; flex: none; display: flex; background: #fff; }
.tree { position: relative; flex: 1; min-width: 0; padding-top: 98px; overflow: hidden; background: #fff; color: #2a2a2a; letter-spacing: -.85px; word-spacing: 1.500px; }
.t-row { position: relative; height: 16px; flex: none; display: flex; align-items: center; white-space: nowrap; }
.t-clip { padding-left: 157px; letter-spacing: -.5px; word-spacing: 0; }
.t-sub { padding-left: 44px; }
.t-sub, .t-top, .t-leaf, .t-news { background: repeating-linear-gradient(#8a8a8a 0 1px, transparent 1px 2px) 12px 0 / 1px 100% no-repeat; }
.t-lock { width: 14px; height: 16px; margin-right: 5px; }
.t-top { padding-left: 8px; }
.t-box { width: 9px; height: 9px; border: 1px solid #777; background: linear-gradient(90deg, #333, #333) center / 5px 1px no-repeat #f2f2f2; margin-right: 6px; flex: none; }
.t-house { width: 16px; height: 16px; margin-right: 4px; flex: none; }
.t-leaf { padding-left: 43px; background:
  repeating-linear-gradient(#8a8a8a 0 1px, transparent 1px 2px) 12px 0 / 1px 100% no-repeat,
  repeating-linear-gradient(#8a8a8a 0 1px, transparent 1px 2px) 32px 0 / 1px 100% no-repeat; }
.t-hall { width: 16px; height: 16px; margin-right: 4px; flex: none; }
.t-leaf::before, .t-sub::before { content: ""; position: absolute; left: 32px; top: 8px; width: 11px; border-top: 1px dotted #888; }
.t-news { padding-left: 23px; color: #333; }
.vsb-tree { width: 20px; padding-right: 2px; background: #fbfbf7; }
.track-top { flex: none; height: 48px; }
.thumb-tree { height: 186px; }
.hsb { height: 17px; flex: none; display: flex; background: #f7f5ec; }
.hb { width: 20px; height: 16px; margin-top: 1px; }
.hsb-thumb { display: flex; align-items: center; justify-content: center; width: 157px; background: linear-gradient(#c4d6f5, #b4c9ef); border: 1px solid #a7bde2; border-radius: 2px; }
.hsb-grip { width: 8px; height: 8px; background: repeating-linear-gradient(90deg, #9db4dc 0 1px, transparent 1px 2px); }
.hsb-corner { width: 20px; background: #ecead8; }
.hsb .sb-track { background: #fbfaf4; }
.toolbar-right { margin-top: 3px; border-top: 1px solid #8898a8; height: 23px; border-radius: 0; }
.online { color: #2a2a2a; letter-spacing: -.5px; }

/* status */
.status { height: 25px; flex: none; display: flex; align-items: center; justify-content: space-between; padding: 2px 22px 0 3px; background: #a9bcd4; color: #5e6f84; letter-spacing: -.45px; border-bottom: 1px solid #4f80d0; }
.net-status { margin: 0; }

/* dialog */
.dialog { position: absolute; left: 339px; top: 172px; width: 801px; height: 641px; display: flex; flex-direction: column; border: 3px solid #0e3fb4; border-top: 0; border-bottom-color: #0a2a86; border-right-color: #0a2a86; border-radius: 6px 6px 0 0; box-shadow: 0 0 1px #fff; }
.dlg-title { position: relative; height: 32px; flex: none; display: flex; align-items: center; padding: 1px 0 0 6px; margin: 0 -3px; border-radius: 6px 6px 0 0; font-weight: 700; font-size: 13px; letter-spacing: -.1px; color: #dde8f8;
  background: linear-gradient(#0b4fd0 0, #0a62f0 8px, #0a5ae6 22px, #0846c4 30px, #0a3eb0 32px); text-shadow: 1px 1px 0 #0a2a86; }
.dlg-close { position: absolute; right: 4px; top: 4px; width: 25px; height: 25px; border: 1px solid #f4f0ee; border-radius: 3px; background: linear-gradient(135deg, #e88a70, #c03a20); }
.dlg-body { flex: 1; min-height: 0; display: flex; flex-direction: column; background: #ece9d8; padding: 22px 0 0 17px; }
.form { display: grid; grid-template-columns: 220px 80px; grid-auto-rows: 20px; align-items: center; letter-spacing: -.85px; word-spacing: 1.500px; }
.f-check { grid-column: 1 / 3; display: flex; align-items: center; gap: 6px; color: #222; padding-bottom: 3px; }
.check { flex: none; width: 13px; height: 13px; border: 1px solid #506a82; background: linear-gradient(135deg, #e0e0da, #fff); }
.tick { display: block; width: 11px; height: 11px; }
.lab { padding: 0 0 4px 3px; color: #222; white-space: nowrap; }
.spin { display: flex; align-items: center; justify-content: space-between; width: 80px; height: 19px; padding: 0 2px 0 1px; border: 1px solid #7f9db9; background: #fff; letter-spacing: -.5px; }
.spin b { font-weight: 400; color: #222; padding-top: 1px; }
.spin-ic { width: 13px; height: 17px; }
.lab-short { grid-column: 1 / 3; grid-row: 12; }
.path { grid-column: 1 / 3; grid-row: 12; position: relative; width: 150px; height: 20px; margin: 1px 0 0 100px; padding: 0 0 0 2px; border: 1px solid #7f9db9; background: #fff; line-height: 18px; letter-spacing: -.5px; color: #222; }
.path::after { content: ""; position: absolute; left: 0; bottom: -5px; width: 66px; height: 4px; border-radius: 2px; background: #cc1212; }
.dlg-buttons { display: flex; gap: 8px; align-items: flex-start; margin-top: auto; padding: 0 0 15px 122px; letter-spacing: -.7px; }
.btn { width: 73px; height: 20px; border: 1px solid #2e3a48; border-radius: 3px; background: linear-gradient(#fff, #f4f4ee 60%, #dcdcd4); color: #333; line-height: 16px; }
.btn-ok { border-color: #1f4f8e; box-shadow: inset 0 0 0 1px #b4cbea; }
.btn-low { margin-top: 1px; }
```
